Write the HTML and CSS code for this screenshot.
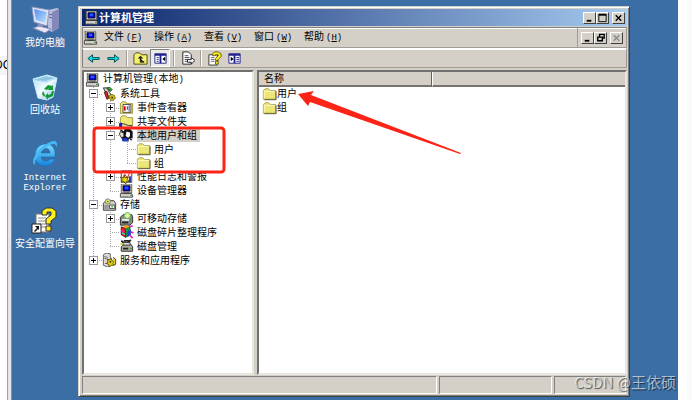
FILE: index.html
```html
<!DOCTYPE html>
<html lang="zh-CN">
<head>
<meta charset="utf-8">
<title>计算机管理</title>
<link rel="stylesheet" href="styles.css">
</head>
<body>
<svg class="defs" aria-hidden="true">
  <defs>
    <linearGradient id="gScreen" x1="0" y1="0" x2="1" y2="1"><stop offset="0" stop-color="#5a8cf0"/><stop offset="1" stop-color="#b8e4fc"/></linearGradient>
    <linearGradient id="gBin" x1="0" y1="0" x2="1" y2="1"><stop offset="0" stop-color="#a8dcf2"/><stop offset=".5" stop-color="#f4fcff"/><stop offset="1" stop-color="#7cbce0"/></linearGradient>
    <linearGradient id="gIE" x1="0" y1="0" x2="0" y2="1"><stop offset="0" stop-color="#7adcff"/><stop offset="1" stop-color="#1583dc"/></linearGradient>
  </defs>
  <symbol id="pc" viewBox="0 0 16 16"><path d="M2 0h11l1 1v9H2z" fill="#d4d0c8" stroke="#555"/><path d="M4 2h8v6H4z" fill="#0000d8" stroke="#111"/><path d="M6 3h4v3H6z" fill="#2858ff"/><path d="M5 10h6v2H5z" fill="#444"/><path d="M1 11h13l1 2v2H1z" fill="#e4e0d8" stroke="#333"/><path d="M3 14h7" stroke="#888"/><path d="M12 13h2" stroke="#008000"/></symbol>
  <symbol id="folder" viewBox="0 0 16 16"><path d="M1 4l2-2h4l2 2h6v10H1z" fill="#e9e36a" stroke="#a5a052"/><path d="M2 5h12" stroke="#fffde0"/><path d="M2 5v8" stroke="#fffbc0"/><path d="M3 7h11M3 9h11M3 11h11" stroke="#f6f2a0" stroke-dasharray="1 1"/><path d="M2 14.500h13.500V5" stroke="#55502c" fill="none"/></symbol>
  <symbol id="tools" viewBox="0 0 16 16"><path d="M1 1l4 0 3 5 3 5-2 2-5-6z" fill="#cfd4d4" stroke="#222"/><path d="M5 1l3-1 3 3-2 2z" fill="#40a040" stroke="#174d17"/><path d="M2 6l3 8 2-1-2-8z" fill="#d33020" stroke="#551010"/><circle cx="11" cy="12" r="3.500" fill="#c8b818" stroke="#4c4408" stroke-dasharray="2 1"/><circle cx="11" cy="12" r="1" fill="#222"/></symbol>
  <symbol id="event" viewBox="0 0 16 16"><path d="M1 3l2-2h4l1 2h7v11H1z" fill="#efe776" stroke="#968d33"/><path d="M4 4h9v9H4z" fill="#fff" stroke="#444"/><path d="M6 6v5" stroke="#d00000" stroke-width="2"/><path d="M9 6v4M11 5v7" stroke="#202090"/></symbol>
  <symbol id="share" viewBox="0 0 16 16"><path d="M1 3l2-2h4l2 2h6v9H1z" fill="#efe776" stroke="#968d33"/><path d="M0 10h5l5 2 4 0v3H5l-5-1z" fill="#efcf9b" stroke="#333"/><path d="M0 9h3v6H0z" fill="#1020c0"/></symbol>
  <symbol id="users" viewBox="0 0 16 16"><path d="M6 1h6l3 3v8l-4-1-1 4H4l-2-4z" fill="#111"/><path d="M8 4l4 1v4l-2 2-3-2z" fill="#fff"/><path d="M1 4l4 2v4l-3 1-2-4z" fill="#f0e4d0" stroke="#222"/><path d="M3 12l5-1 3 4H3z" fill="#1a3cc8"/><path d="M1 2l4 3M11 11l3 3" stroke="#111" stroke-width="1.500"/></symbol>
  <symbol id="perf" viewBox="0 0 16 16"><path d="M2 1h12v13H2z" fill="#fff" stroke="#333"/><path d="M4 11l2-6 3 4 3-7" fill="none" stroke="#c00" /><path d="M1 8l4 1 0-3 2 3 3-1-1 3 3 2-4 0-1 3-2-3-3 1 1-3z" fill="#e4d614" stroke="#4d4506"/><path d="M12 7v7" stroke="#2020a0" stroke-width="2"/></symbol>
  <symbol id="storage" viewBox="0 0 16 16"><path d="M1 6l3-3h9l2 3v8H1z" fill="#d0cfc6" stroke="#333"/><circle cx="6" cy="4" r="3" fill="#e8e475" stroke="#777"/><circle cx="6" cy="4" r="1" fill="#3a8c3a"/><path d="M2 8h5v5H2z" fill="#999"/><path d="M8 8h6v4H8z" fill="#eee" stroke="#444"/><path d="M10 10h2" stroke="#090"/></symbol>
  <symbol id="removable" viewBox="0 0 16 16"><path d="M1 6l3-3h10l1 3v6l-3 3H1z" fill="#8a8d88" stroke="#222"/><circle cx="9" cy="4" r="3.500" fill="#e6e87c" stroke="#4b8"/><circle cx="9" cy="4" r="1" fill="#fff"/><path d="M3 8h8v2H3z" fill="#eee"/><path d="M3 12h7" stroke="#222" stroke-width="2"/><path d="M12 8v3" stroke="#0b0"/></symbol>
  <symbol id="defrag" viewBox="0 0 16 16"><path d="M2 2l5 2v10l-5-3z" fill="#e02020" stroke="#600"/><path d="M7 4l5-2v9l-5 3z" fill="#20a040" stroke="#053"/><path d="M4 1l4-1 4 2-5 2z" fill="#f0a020"/><path d="M9 7l4-2v6l-4 3z" fill="#2040d0"/><path d="M11 2l4-1M13 8l3 1M12 12l3 3M2 6l3 2" stroke="#e020c0" stroke-width="2"/><path d="M3 9l3 2" stroke="#20d8e8" stroke-width="2"/></symbol>
  <symbol id="disk" viewBox="0 0 16 16"><path d="M2 9l3-3h8l2 3v5H2z" fill="#aaa89f" stroke="#222"/><path d="M2 2l5 4M13 1L8 6M5 2h6" stroke="#222" stroke-width="2"/><path d="M4 4h8v3H4z" fill="#ddd" stroke="#333"/><path d="M4 11h6" stroke="#222" stroke-width="2"/><path d="M12 11h2" stroke="#0a0"/><path d="M1 6h3" stroke="#cc3" stroke-width="2"/></symbol>
  <symbol id="services" viewBox="0 0 16 16"><path d="M1 2l3-2 5 1v13l-3 2-5-2z" fill="#dcdad2" stroke="#555"/><path d="M2 4l4 1M2 6l4 1" stroke="#666"/><path d="M3 12h2" stroke="#c00"/><path d="M6 7l2 1 2-2 1 3 2 0-1 3 1 2-3 0-2 2-1-3-2-1 1-2z" fill="#e4cf18" stroke="#433c05"/><path d="M12 5l3 2v6l-2 1" fill="#ded023" stroke="#433c05"/><circle cx="9" cy="10" r="1" fill="#222"/></symbol>
  <symbol id="min" viewBox="0 0 12 10"><path d="M3 7h5v2H3z"/></symbol>
  <symbol id="close" viewBox="0 0 12 10"><path d="M3 2l6 6M9 2L3 8" stroke="currentColor" stroke-width="1.500" fill="none"/></symbol>
</svg>

<div class="gutter-left"><span>DC</span></div>
<main class="desktop">
  <nav class="shortcuts" aria-label="桌面">
    <a class="shortcut" href="#">
      <svg viewBox="0 0 30 28"><path d="M18 4l9-2 2 1v19l-7 4-4-2z" fill="#b9bedb"/><path d="M22 6l7-3v19l-7 4z" fill="#8289b8"/><path d="M19 8l3 1M19 11l3 1" stroke="#555e90"/><path d="M2 1l17 3-2 16L4 16z" fill="#e3e5f4" stroke="#9198c3"/><path d="M4 3l13 3-2 11L6 14z" fill="url(#gScreen)"/><path d="M8 17l5 2v3H7z" fill="#8e94c0"/><path d="M3 22l6-2 12 3-6 4z" fill="#e8e9f4" stroke="#8087b4"/></svg>
      <span>我的电脑</span>
    </a>
    <a class="shortcut" href="#">
      <svg viewBox="0 0 30 28"><path d="M3 6l14-4 10 3-4 19-6 3-9-2z" fill="url(#gBin)" stroke="#c8effc"/><path d="M3 6l13 3 11-4" stroke="#a5d7ee" fill="none"/><path d="M5 7l11-4 9 2-9 3z" fill="#8cc4e2"/><path d="M14 16l4-4 4 1 1-1v5l-5 0 1-2-2 2zM22 18l2 0-1 5-5 2v2l-3-4 3-3v2l3-1zM13 18l2 4-1 2-2-3z" fill="#139a31"/></svg>
      <span>回收站</span>
    </a>
    <a class="shortcut" href="#">
      <svg viewBox="0 0 30 28"><path d="M25 17H11c1 5 7 5 9 2h5c-2 5-6 7-10 7C8 26 5 21 5 15 5 9 9 4 16 4c7 0 10 6 9 13zM11 13h9c0-6-8-6-9 0z" fill="url(#gIE)" stroke="#116bb8" stroke-width=".6" fill-rule="evenodd"/><path d="M5 25C-1 22 8 8 18 3c7-4 11-2 8 5 1-5-3-5-8-2C10 11 4 20 5 25z" fill="#46b9f4"/></svg>
      <span>Internet<br>Explorer</span>
    </a>
    <a class="shortcut" href="#">
      <svg viewBox="0 0 30 28"><path d="M6 7h13v18H6z" fill="#fff" stroke="#777"/><path d="M8 11h8M8 14h8M8 17h9M8 20h9" stroke="#888"/><path d="M12 8V4l4-3h6l4 3v6l-5 4v3h-5v-5l5-4V5h-4v3z" fill="#fff01c" stroke="#333"/><path d="M16 19h5v5h-5z" fill="#fff01c" stroke="#333"/><path d="M2 17h9v9H2z" fill="#fff" stroke="#222"/><path d="M5 19h4v4l-1-1-3 3-1-1 3-3z" fill="#111"/></svg>
      <span>安全配置向导</span>
    </a>
  </nav>

  <section class="window">
    <header class="titlebar">
      <svg class="icon"><use href="#pc"/></svg>
      <h1>计算机管理</h1>
      <div class="winbtns">
        <button class="wbtn" aria-label="最小化"><svg><use href="#min"/></svg></button>
        <button class="wbtn" aria-label="最大化"><svg viewBox="0 0 12 10"><path d="M2 1h8v8H2z" fill="none" stroke="#000"/><path d="M2 1.500h8" stroke="#000" stroke-width="2"/></svg></button>
        <button class="wbtn last" aria-label="关闭"><svg><use href="#close"/></svg></button>
      </div>
    </header>

    <div class="menubar">
      <svg class="icon"><use href="#pc"/></svg>
      <div class="menus">
        <button>文件<kbd>(<u>F</u>)</kbd></button>
        <button>操作<kbd>(<u>A</u>)</kbd></button>
        <button>查看<kbd>(<u>V</u>)</kbd></button>
        <button>窗口<kbd>(<u>W</u>)</kbd></button>
        <button>帮助<kbd>(<u>H</u>)</kbd></button>
      </div>
      <div class="winbtns child">
        <button class="wbtn" aria-label="最小化子窗口"><svg><use href="#min"/></svg></button>
        <button class="wbtn" aria-label="还原子窗口"><svg viewBox="0 0 12 10"><path d="M5 1h5v4H5z" fill="none" stroke="#000" stroke-width="1.500"/><path d="M3 4h5v4H3z" fill="#d4d0c8" stroke="#000" stroke-width="1.500"/></svg></button>
        <button class="wbtn last" aria-label="关闭子窗口" disabled><svg><use href="#close"/></svg></button>
      </div>
    </div>

    <div class="toolbar">
      <button aria-label="后退"><svg viewBox="0 0 16 16"><path d="M2 8l5-4v3h7v2H7v3z" fill="#00e0e8" stroke="#064a50"/></svg></button>
      <button aria-label="前进"><svg viewBox="0 0 16 16"><path d="M14 8L9 4v3H2v2h7v3z" fill="#00e0e8" stroke="#064a50"/></svg></button>
      <i></i>
      <button aria-label="上一级"><svg viewBox="0 0 16 16"><path d="M1 4l2-2h4l2 2h6v10H1z" fill="#f7f36b" stroke="#4a4813"/><path d="M5 8l3-3 3 3zM8 8v4h4" fill="#222" stroke="none"/><path d="M8 7v4.500h4" fill="none" stroke="#222" stroke-width="1.500"/></svg></button>
      <button class="pressed" aria-label="显示/隐藏控制台树"><svg viewBox="0 0 16 16"><path d="M2 3h12v10H2z" fill="#fff" stroke="#22228e"/><path d="M2 4h12M8 4v9" stroke="#22228e" stroke-width="2"/><path d="M4 7h2M4 9h2M4 11h2" stroke="#22228e"/><path d="M13 6v5l-3-2.500z"/></svg></button>
      <i></i>
      <button aria-label="导出列表"><svg viewBox="0 0 16 16"><path d="M3 1h6l3 3v10H3z" fill="#fff" stroke="#222"/><path d="M5 5h4M5 7h5M5 9h4M5 11h4" stroke="#444"/><path d="M8 9h4V7l4 3-4 4v-2H8z" fill="#eee" stroke="#222"/></svg></button>
      <i></i>
      <button aria-label="帮助"><svg viewBox="0 0 16 16"><path d="M2 4h9v11H2z" fill="#fff" stroke="#333"/><path d="M4 7h4M4 9h4M4 11h4" stroke="#666"/><path d="M6 5V3l2-2h4l3 2v3l-3 3v1H9V8l3-3V4H9v1zM9 11h3v3H9z" fill="#fff01c" stroke="#443c00" stroke-width=".8"/></svg></button>
      <button aria-label="显示/隐藏操作窗格"><svg viewBox="0 0 16 16"><path d="M2 3h12v10H2z" fill="#fff" stroke="#22228e"/><path d="M2 4h12M8 4v9" stroke="#22228e" stroke-width="2"/><path d="M10 7h3M10 9h3M10 11h3" stroke="#22228e"/><path d="M4 6v5l3-2.500z"/></svg></button>
    </div>

    <div class="panes">
      <ul class="tree">
        <li><svg class="icon"><use href="#pc"/></svg><span>计算机管理<kbd>(</kbd>本地<kbd>)</kbd></span></li>
        <li><b class="t"><button class="box" aria-label="折叠"></button></b><svg class="icon"><use href="#tools"/></svg><span>系统工具</span></li>
        <li><b class="v"></b><b class="t"><button class="box plus" aria-label="展开"></button></b><svg class="icon"><use href="#event"/></svg><span>事件查看器</span></li>
        <li><b class="v"></b><b class="t"><button class="box plus" aria-label="展开"></button></b><svg class="icon"><use href="#share"/></svg><span>共享文件夹</span></li>
        <li><b class="v"></b><b class="t"><button class="box" aria-label="折叠"></button></b><svg class="icon"><use href="#users"/></svg><span class="selected">本地用户和组</span></li>
        <li><b class="v"></b><b class="v"></b><b class="t"></b><svg class="icon"><use href="#folder"/></svg><span>用户</span></li>
        <li><b class="v"></b><b class="v"></b><b class="t end"></b><svg class="icon"><use href="#folder"/></svg><span>组</span></li>
        <li><b class="v"></b><b class="t"><button class="box plus" aria-label="展开"></button></b><svg class="icon"><use href="#perf"/></svg><span>性能日志和警报</span></li>
        <li><b class="v"></b><b class="t end"></b><svg class="icon"><use href="#pc"/></svg><span>设备管理器</span></li>
        <li><b class="t"><button class="box" aria-label="折叠"></button></b><svg class="icon"><use href="#storage"/></svg><span>存储</span></li>
        <li><b class="v"></b><b class="t"><button class="box plus" aria-label="展开"></button></b><svg class="icon"><use href="#removable"/></svg><span>可移动存储</span></li>
        <li><b class="v"></b><b class="t"></b><svg class="icon"><use href="#defrag"/></svg><span>磁盘碎片整理程序</span></li>
        <li><b class="v"></b><b class="t end"></b><svg class="icon"><use href="#disk"/></svg><span>磁盘管理</span></li>
        <li><b class="t end"><button class="box plus" aria-label="展开"></button></b><svg class="icon"><use href="#services"/></svg><span>服务和应用程序</span></li>
      </ul>
      <div class="list">
        <table>
          <colgroup><col class="name-col"><col></colgroup>
          <thead><tr><th scope="col">名称</th><td></td></tr></thead>
          <tbody>
            <tr><td><div class="item"><svg class="icon"><use href="#folder"/></svg>用户</div></td><td></td></tr>
            <tr><td><div class="item"><svg class="icon"><use href="#folder"/></svg>组</div></td><td></td></tr>
          </tbody>
        </table>
      </div>
    </div>

    <footer class="status"><div></div><div></div><div></div></footer>
  </section>
</main>
<div class="gutter-right"></div>

<svg class="marks" viewBox="0 0 692 400" aria-hidden="true">
  <rect x="94" y="128" width="130" height="44" rx="3" fill="none" stroke="#fb2416" stroke-width="3"/>
  <path d="M298 94L314 91 311 95 461 153 460 154 310 102 308 106z" fill="#fb2416"/>
</svg>
<div class="watermark">CSDN @王依硕</div>
</body>
</html>
```
FILE: styles.css
```css
* { box-sizing: border-box; }

body {
  margin: 0;
  height: 100vh;
  display: flex;
  position: relative;
  overflow: hidden;
  background: #fff;
  color: #000;
  font: 10px/14px "Liberation Sans", "Noto Sans CJK SC", sans-serif;
}

button {
  font: inherit;
  color: inherit;
  padding: 0;
  border: 0;
  background: none;
}

kbd { font: 9px/14px "Liberation Mono", monospace; }
.defs { position: absolute; width: 0; height: 0; }
.icon { width: 15px; height: 14px; flex: none; }

.gutter-left {
  width: 12px;
  flex: none;
  padding-top: 56px;
  background: linear-gradient(to right, #fff 7px, #a2a2a2 7px 8px, #e6e6e6 8px 11px, #8a8f94 11px);
}
.gutter-left span {
  display: block;
  width: 7px;
  background: #f4f4f4;
  font-size: 12px;
  line-height: 19px;
  text-indent: -6px;
  overflow: hidden;
}
.gutter-right {
  width: 14px;
  flex: none;
  background: linear-gradient(to right, #fff 9px, #fafafa 9px);
}

.desktop {
  flex: 1;
  min-width: 0;
  display: flex;
  background: #3a6ea5;
  padding: 6px 48px 3px 0;
}

.shortcuts {
  width: 66px;
  flex: none;
  display: grid;
  grid-auto-rows: 67px;
  align-content: start;
}
.shortcut {
  display: flex;
  flex-direction: column;
  align-items: center;
  color: #fff;
  text-decoration: none;
  text-align: center;
  white-space: nowrap;
  font: 10px/10px "Liberation Mono", "Noto Sans CJK SC", monospace;
}
.shortcut svg { width: 30px; height: 28px; margin-bottom: 5px; }
.shortcut:nth-child(3) { font-size: 9px; }

.window {
  flex: 1;
  min-width: 0;
  display: flex;
  flex-direction: column;
  padding: 2px;
  background: #d4d0c8;
  border: 1px solid;
  border-color: #d4d0c8 #404040 #404040 #d4d0c8;
  box-shadow: inset 1px 1px #fff, inset -1px -1px #808080;
}

.titlebar {
  height: 17px;
  flex: none;
  display: flex;
  align-items: center;
  margin: 0 0 0 1px;
  padding: 0 2px;
  color: #fff;
  background: linear-gradient(to right, #0a246a, #a6caf0);
}
.titlebar h1 { margin: 0; font-size: 11px; line-height: 16px; flex: 1; }

.winbtns { display: flex; }
.wbtn {
  width: 13px;
  height: 12px;
  display: flex;
  background: #d4d0c8;
  color: #000;
  border: 1px solid;
  border-color: #fff #404040 #404040 #fff;
}
.wbtn svg { width: 11px; height: 10px; }
.wbtn.last { margin-left: 3px; }
.wbtn:disabled { color: #8b8882; }

.menubar, .toolbar {
  flex: none;
  display: flex;
  align-items: center;
  margin: 1px 0 0 1px;
  border: 1px solid;
  border-color: #808080 #9a9a9a #a09d97 #808080;
  box-shadow: inset 0 1px #fff;
}
.menubar { height: 21px; }
.menus { flex: 1; display: flex; padding-left: 6px; }
.menus button { width: 50px; text-align: left; white-space: nowrap; }
.menus kbd { margin-left: 2px; }
.child {
  align-self: stretch;
  align-items: center;
  padding: 0 3px;
  border-left: 1px solid #a09d97;
}

.toolbar { height: 20px; margin-top: 0; border-top-color: #fff; }
.toolbar button {
  width: 20px;
  height: 18px;
  display: flex;
  align-items: center;
  justify-content: center;
}
.toolbar svg { width: 15px; height: 15px; }
.toolbar .pressed {
  background: #ecebe7;
  border: 1px solid;
  border-color: #808080 #fff #fff #808080;
}
.toolbar i {
  width: 1px;
  height: 16px;
  margin: 0 3px;
  background: #a09d97;
  box-shadow: 1px 0 #fff;
}

.panes {
  flex: 1;
  min-height: 0;
  display: flex;
  gap: 3px;
  margin: 2px 0 0 1px;
}
.tree, .list {
  background: #fff;
  border: 2px solid;
  border-color: #707070 #e8e6e0 #e8e6e0 #707070;
}
.tree {
  width: 172px;
  flex: none;
  margin: 0;
  padding: 1px 0 106px 1px;
  list-style: none;
  display: grid;
  grid-template-rows: repeat(14, 1fr);
}
.tree li { display: flex; align-items: stretch; min-height: 0; white-space: nowrap; }
.tree .icon { align-self: center; margin: 0 3px 0 0; }
.tree span { align-self: center; line-height: 13px; padding-right: 3px; }
.tree .selected { background: #d4d0c8; }
.tree b {
  width: 17px;
  flex: none;
  display: flex;
  align-items: center;
  justify-content: center;
  background: repeating-linear-gradient(to bottom, #aaa 0 1px, #fff 1px 2px) 8px 0 / 1px 100% no-repeat;
}
.tree .t {
  background:
    repeating-linear-gradient(to bottom, #aaa 0 1px, #fff 1px 2px) 8px 0 / 1px 100% no-repeat,
    repeating-linear-gradient(to right, #aaa 0 1px, #fff 1px 2px) 8px 7px / 9px 1px no-repeat;
}
.tree .end { background-size: 1px 50%, 9px 1px; }
.box {
  width: 9px;
  height: 9px;
  border: 1px solid #999;
  background: linear-gradient(#000, #000) center / 5px 1px no-repeat, #fff;
}
.box.plus {
  background:
    linear-gradient(#000, #000) center / 5px 1px no-repeat,
    linear-gradient(#000, #000) center / 1px 5px no-repeat, #fff;
}

.list { flex: 1; min-width: 0; }
table { width: 100%; border-collapse: separate; border-spacing: 0; table-layout: fixed; }
.name-col { width: 173px; }
th, td { padding: 0; text-align: left; font-weight: normal; }
thead th, thead td {
  height: 15px;
  line-height: 13px;
  background: #d4d0c8;
  border-bottom: 2px solid #77746e;
}
thead th { padding-left: 5px; border-right: 1px solid #606060; }
thead td { border-left: 1px solid #fff; }
.item { display: flex; align-items: center; height: 14px; padding-left: 3px; }

.status { height: 18px; flex: none; display: flex; gap: 2px; margin: 1px 1px 0; }
.status div {
  flex: 1;
  border: 1px solid;
  border-color: #808080 #fff #fff #808080;
}
.status div:nth-child(2) { flex: 0 0 113px; }
.status div:nth-child(3) { flex: 0 0 72px; }

.marks { position: absolute; left: 0; top: 0; width: 692px; height: 400px; pointer-events: none; }
.watermark {
  position: absolute;
  right: 16px;
  bottom: 8px;
  font: 15px/20px "Noto Sans CJK SC", sans-serif;
  color: rgba(255, 255, 255, .6);
  text-shadow: 1px 1px 1px rgba(0, 0, 0, .6);
}
```
